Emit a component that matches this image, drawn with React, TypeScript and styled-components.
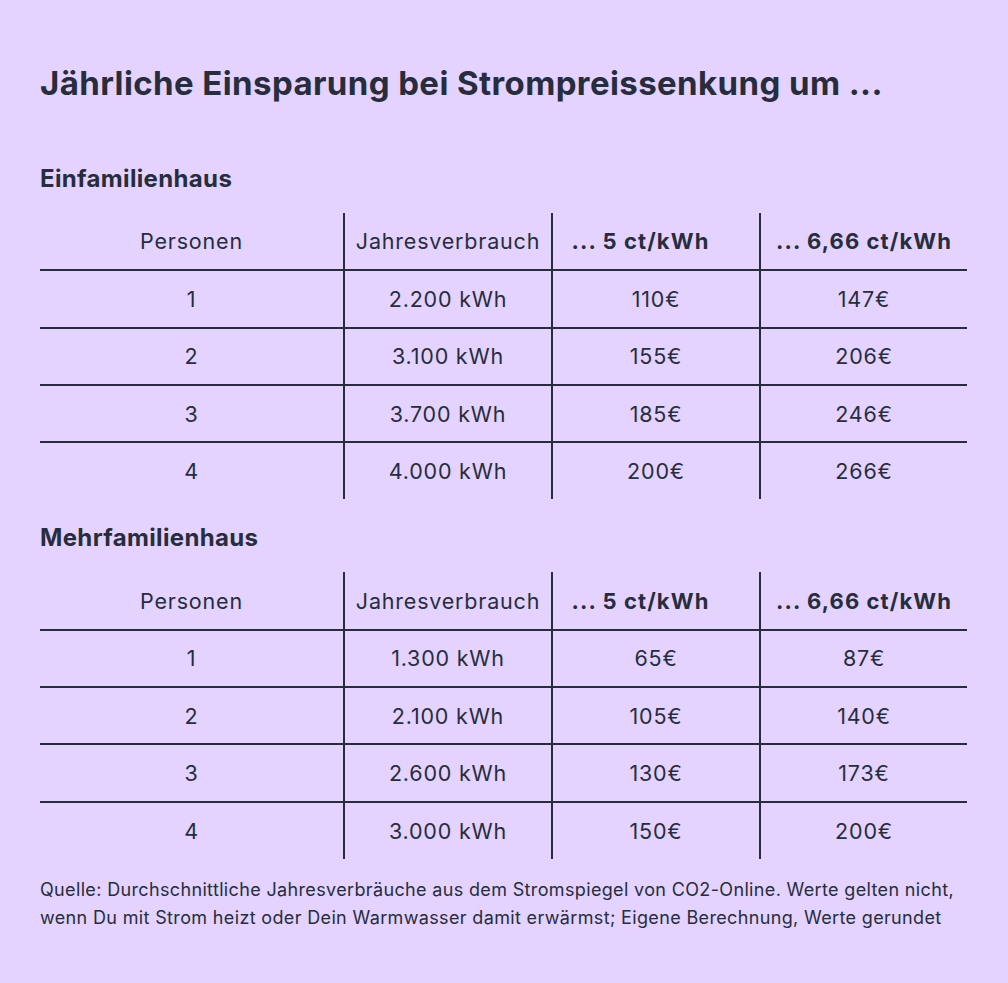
import React from "react";
import styled, { createGlobalStyle } from "styled-components";

const Global = createGlobalStyle`
  html, body { margin: 0; padding: 0; background: #e3d3fe; }
  body { width: 1008px; min-height: 983px; }
`;

const Page = styled.div`
  box-sizing: border-box;
  width: 1008px;
  height: 983px;
  padding: 63px 41px 0 40px;
  background: #e3d3fe;
  color: #272d3c;
  font-family: "Inter", "Liberation Sans", sans-serif;
`;

const Title = styled.h1`
  margin: 0;
  font-weight: 700;
  font-size: 33px;
  line-height: 40px;
  letter-spacing: 0.4px;
`;

const SectionTitle = styled.h2<{ $top: number }>`
  margin: ${(p) => p.$top}px 0 0 0;
  font-weight: 700;
  font-size: 24px;
  line-height: 26px;
  letter-spacing: 0.35px;
`;

const Table = styled.table`
  margin-top: 21px;
  width: 927px;
  border-collapse: collapse;
  table-layout: fixed;
`;

const Col = styled.col<{ $w: number }>`
  width: ${(p) => p.$w}px;
`;

const Row = styled.tr`
  height: 57.3px;
  & + & > td {
    border-top: 2px solid #272d3c;
  }
`;

const Cell = styled.td<{ $bold?: boolean; $shift?: number }>`
  padding: 0 ${(p) => p.$shift ?? 0}px 0 0;
  text-align: center;
  vertical-align: middle;
  font-size: ${(p) => (p.$bold ? 22 : 21.5)}px;
  font-weight: ${(p) => (p.$bold ? 700 : 400)};
  letter-spacing: ${(p) => (p.$bold ? 1.1 : 0.8)}px;
  color: #272d3c;
  & + & {
    border-left: 2px solid #272d3c;
  }
`;

const Footer = styled.p`
  margin: 17px 0 0 0;
  font-size: 18px;
  line-height: 28px;
  letter-spacing: 0.35px;
  color: #272d3c;
`;

type Data = [string, string, string, string][];

const efh: Data = [
  ["1", "2.200 kWh", "110€", "147€"],
  ["2", "3.100 kWh", "155€", "206€"],
  ["3", "3.700 kWh", "185€", "246€"],
  ["4", "4.000 kWh", "200€", "266€"],
];

const mfh: Data = [
  ["1", "1.300 kWh", "65€", "87€"],
  ["2", "2.100 kWh", "105€", "140€"],
  ["3", "2.600 kWh", "130€", "173€"],
  ["4", "3.000 kWh", "150€", "200€"],
];

const SavingsTable = ({ rows }: { rows: Data }) => (
  <Table>
    <colgroup>
      <Col $w={304} />
      <Col $w={208} />
      <Col $w={208} />
      <Col $w={207} />
    </colgroup>
    <tbody>
      <Row>
        <Cell>Personen</Cell>
        <Cell>Jahresverbrauch</Cell>
        <Cell $bold $shift={31}>... 5 ct/kWh</Cell>
        <Cell $bold>... 6,66 ct/kWh</Cell>
      </Row>
      {rows.map((r) => (
        <Row key={r[0]}>
          {r.map((c, i) => (
            <Cell key={i}>{c}</Cell>
          ))}
        </Row>
      ))}
    </tbody>
  </Table>
);

export default function App() {
  return (
    <Page>
      <Global />
      <Title>Jährliche Einsparung bei Strompreissenkung um ...</Title>
      <SectionTitle $top={63}>Einfamilienhaus</SectionTitle>
      <SavingsTable rows={efh} />
      <SectionTitle $top={26}>Mehrfamilienhaus</SectionTitle>
      <SavingsTable rows={mfh} />
      <Footer>
        Quelle: Durchschnittliche Jahresverbräuche aus dem Stromspiegel von CO2-Online. Werte gelten nicht,
        <br />
        wenn Du mit Strom heizt oder Dein Warmwasser damit erwärmst; Eigene Berechnung, Werte gerundet
      </Footer>
    </Page>
  );
}
